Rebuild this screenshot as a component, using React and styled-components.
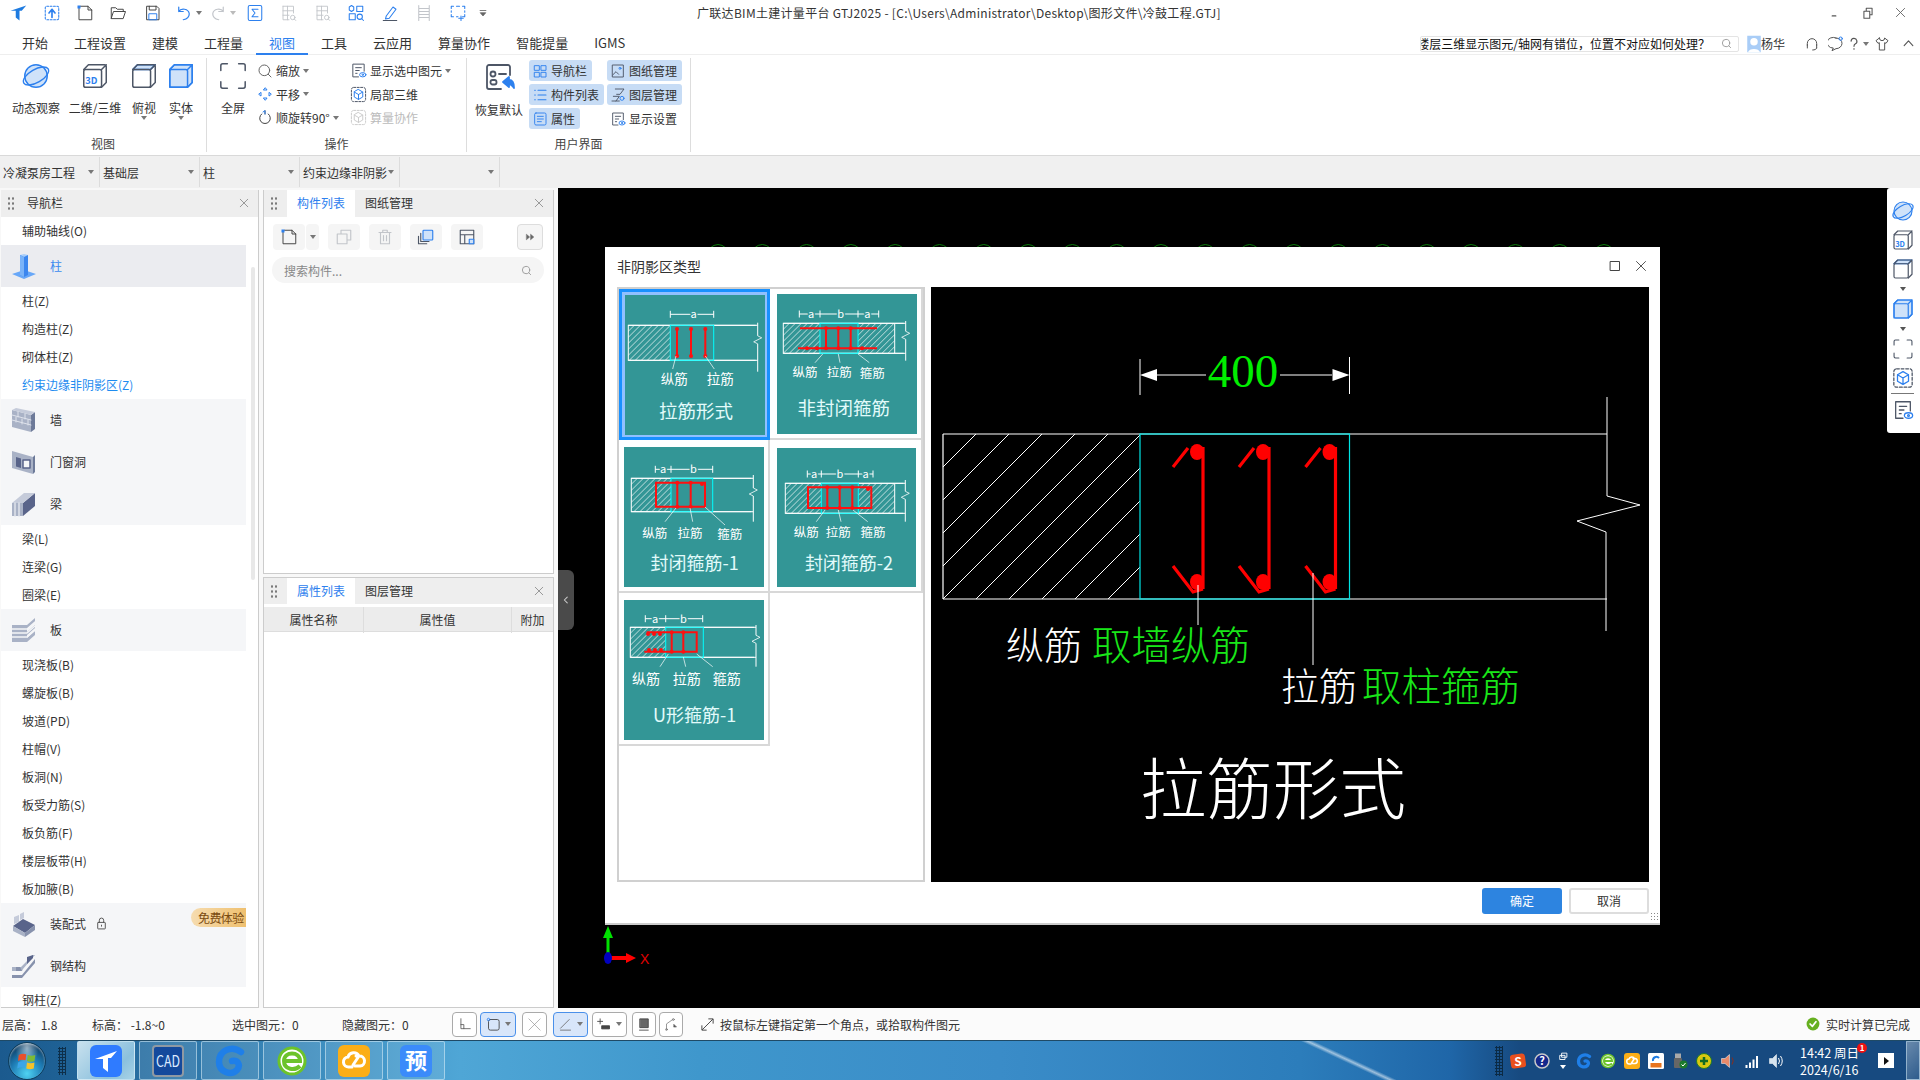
import React from 'react';
import styled, { createGlobalStyle } from 'styled-components';

const INK = '#4d5666';
const BLUE = '#2d80ee';
const PALE = '#cfe2f9';
const MUTED = '#c2c5ca';
const TEAL = '#339696';
const FONT = '"Noto Sans CJK SC", "Noto Sans", sans-serif';

const Global = createGlobalStyle`
  html, body { margin: 0; padding: 0; background: #000; }
  body { font-family: ${FONT}; font-size: 12px; color: #333; }
  #root { width: 1920px; height: 1080px; overflow: hidden; }
  * { box-sizing: border-box; }
`;

const I = styled.svg.attrs((p) => ({
  viewBox: p.$vb || '0 0 24 24',
  width: p.$s || 16,
  height: p.$s || 16,
}))`
  display: block;
  flex: none;
  fill: none;
  stroke: ${(p) => p.$c || INK};
  stroke-width: ${(p) => p.$sw || 1.5};
  stroke-linecap: round;
  stroke-linejoin: round;
  text { stroke: none; font-family: ${FONT}; }
`;

const Caret = styled.span`
  display: block;
  flex: none;
  width: 0;
  height: 0;
  border-left: 3px solid transparent;
  border-right: 3px solid transparent;
  border-top: 4px solid ${(p) => p.$c || '#777'};
`;

const Page = styled.div`
  width: 1920px;
  height: 1080px;
  display: flex;
  flex-direction: column;
  background: #fff;
  overflow: hidden;
`;

/* ---------- title bar ---------- */
const TitleBar = styled.div`
  height: 26px;
  padding-bottom: 1px;
  display: flex;
  align-items: center;
  flex: none;
`;
const QuickTools = styled.div`
  width: 697px;
  display: flex;
  align-items: center;
  flex: none;
`;
const QuickSlot = styled.div`
  width: ${(p) => p.$w}px;
  height: 25px;
  display: flex;
  align-items: center;
  justify-content: center;
  gap: 3px;
  flex: none;
`;
const WindowTitle = styled.div`
  flex: 1;
  font-size: 12px;
  color: #333;
  white-space: nowrap;
  letter-spacing: 0.3px;
`;
const WinControls = styled.div`
  display: flex;
  align-items: center;
  gap: 20px;
  padding-right: 14px;
`;

/* ---------- tabs ---------- */
const TabRow = styled.div`
  height: 29px;
  display: flex;
  align-items: stretch;
  padding-left: 9px;
  flex: none;
  border-bottom: 1px solid #eee;
`;
const RibbonTab = styled.div`
  padding: 6px 13px 0;
  font-size: 13px;
  line-height: 22px;
  position: relative;
  color: ${(p) => (p.$on ? BLUE : '#333')};
  border-bottom: 2px solid ${(p) => (p.$on ? BLUE : 'transparent')};
  margin-bottom: -1px;
  white-space: nowrap;
`;
const HelpArea = styled.div`
  margin-left: auto;
  display: flex;
  align-items: center;
  padding: 7px 0 0;
`;
const QuestionBox = styled.div`
  width: 319px;
  height: 16px;
  margin-right: 6px;
  display: flex;
  align-items: center;
  justify-content: flex-end;
  gap: 11px;
  padding-right: 6px;
  border: 1px solid #e4e4e4;
  border-radius: 2px;
  overflow: hidden;
  font-size: 12px;
  color: #111;
  white-space: nowrap;
`;
const UserName = styled.span`
  font-size: 12px;
  margin-left: -2px;
  width: 39px;
  white-space: nowrap;
`;
const HelpIcon = styled.div`
  width: ${(p) => p.$w}px;
  display: flex;
  justify-content: center;
  align-items: center;
  gap: 2px;
`;

/* ---------- ribbon ---------- */
const Ribbon = styled.div`
  height: 100px;
  display: flex;
  padding-top: 3px;
  flex: none;
  background: #fff;
`;
const Group = styled.div`
  width: ${(p) => p.$w}px;
  height: 94px;
  border-right: 1px solid #ddd;
  display: flex;
  flex-direction: column;
  flex: none;
`;
const GroupBody = styled.div`
  height: 78px;
  display: flex;
  flex: none;
`;
const GroupLabel = styled.div`
  text-align: center;
  font-size: 12px;
  line-height: 16px;
  color: #444;
`;
const BigButton = styled.div`
  width: ${(p) => p.$w}px;
  margin-left: ${(p) => p.$ml || 0}px;
  display: flex;
  flex-direction: column;
  align-items: center;
  padding-top: 3px;
  flex: none;
`;
const BigLabel = styled.div`
  margin-top: 9px;
  font-size: 12px;
  line-height: 16px;
  white-space: nowrap;
  color: #333;
`;
const SmallCol = styled.div`
  width: ${(p) => p.$w}px;
  margin-left: ${(p) => p.$ml || 0}px;
  display: flex;
  flex-direction: column;
  padding-top: 1px;
  flex: none;
`;
const SmallRow = styled.div`
  height: 23.5px;
  display: flex;
  align-items: center;
  gap: 3px;
  font-size: 12px;
  white-space: nowrap;
  color: ${(p) => (p.$off ? '#bbb' : '#333')};
`;
const PillCol = styled.div`
  width: ${(p) => p.$w}px;
  margin-left: ${(p) => p.$ml || 0}px;
  display: flex;
  flex-direction: column;
  align-items: flex-start;
  gap: 3px;
  padding-top: 2px;
  flex: none;
`;
const Pill = styled.div`
  height: 21px;
  display: flex;
  align-items: center;
  gap: 3px;
  padding: 0 5px 0 3px;
  font-size: 12px;
  white-space: nowrap;
  border-radius: 3px;
  background: ${(p) => (p.$on ? '#c7dcf5' : 'transparent')};
  color: #333;
`;

/* ---------- context bar ---------- */
const ContextBar = styled.div`
  height: 33px;
  flex: none;
  display: flex;
  background: #f0f0f0;
  border-top: 1px solid #d9d9d9;
  padding-top: 1px;
`;
const Combo = styled.div`
  width: ${(p) => p.$w || 100}px;
  height: 30px;
  padding: 0 5px 0 3px;
  display: flex;
  align-items: center;
  justify-content: space-between;
  border-right: 1px solid #dcdcdc;
  font-size: 12px;
  white-space: nowrap;
  color: #333;
  flex: none;
`;

/* ---------- main ---------- */
const Main = styled.div`
  height: 820px;
  flex: none;
  display: flex;
`;
const Dock = styled.div`
  width: 558px;
  flex: none;
  display: flex;
  gap: 4px;
  padding: 2px 4px 0 1px;
  background: #f8f8f8;
`;
const NavPanel = styled.div`
  width: 258px;
  display: flex;
  flex-direction: column;
  background: #fff;
  border-right: 1px solid #ccc;
  border-bottom: 1px solid #ccc;
  overflow: hidden;
`;
const PanelHead = styled.div`
  height: 27px;
  flex: none;
  display: flex;
  align-items: stretch;
  background: #eee;
`;
const Grip = styled.span`
  width: 7px;
  height: 14px;
  margin: 6px 0 0 6px;
  flex: none;
  background: radial-gradient(circle, #7a7a7a 1px, transparent 1.3px) 0 0 / 4px 5px;
`;
const HeadTitle = styled.div`
  margin-left: 13px;
  font-size: 12px;
  line-height: 26px;
  color: #333;
`;
const HeadClose = styled.div`
  margin-left: auto;
  padding: 8px 9px 0 0;
`;
const NavBody = styled.div`
  flex: 1;
  display: flex;
  min-height: 0;
`;
const NavList = styled.div`
  width: 245px;
  flex: none;
  overflow: hidden;
`;
const NavItem = styled.div`
  height: ${(p) => (p.$cut ? 20 : 28)}px;
  padding-left: 21px;
  padding-top: ${(p) => (p.$cut ? 6 : 0)}px;
  font-size: 12px;
  line-height: ${(p) => (p.$cut ? 14 : 28)}px;
  color: ${(p) => (p.$on ? '#1e8cf0' : '#333')};
  white-space: nowrap;
`;
const NavSection = styled.div`
  position: relative;
  height: 42px;
  display: flex;
  align-items: center;
  padding-left: 10px;
  padding-bottom: 1px;
  font-size: 12px;
  color: ${(p) => (p.$on ? '#3b8aef' : '#333')};
  background: ${(p) => (p.$on ? '#ebecf0' : '#f5f6f8')};
`;
const SectionLabel = styled.span`
  margin-left: 13px;
  white-space: nowrap;
`;
const Badge = styled.span`
  position: absolute;
  right: 0;
  top: 5px;
  width: 55px;
  height: 19px;
  line-height: 19px;
  padding-left: 7px;
  font-size: 12px;
  color: #7a4a10;
  white-space: nowrap;
  letter-spacing: -0.6px;
  border-radius: 10px 0 0 10px;
  background: linear-gradient(90deg, #f6dcb0, #efc06f);
`;
const LockSlot = styled.span`
  margin-left: 9px;
`;
const NavScroll = styled.div`
  width: 4px;
  height: 313px;
  margin: 50px 0 0 5px;
  border-radius: 2px;
  background: #e8e8e8;
`;
const MidCol = styled.div`
  width: 291px;
  display: flex;
  flex-direction: column;
  gap: 3px;
`;
const MidPanel = styled.div`
  height: ${(p) => (p.$h ? `${p.$h}px` : 'auto')};
  flex: ${(p) => (p.$h ? 'none' : 1)};
  background: #fff;
  border: 1px solid #ccc;
  border-top: none;
  display: flex;
  flex-direction: column;
`;
const MidHead = styled(PanelHead)`
  border-top: ${(p) => (p.$line ? '1px solid #ccc' : 'none')};
`;
const PanelTab = styled.div`
  width: ${(p) => (p.$on ? 68 : 72)}px;
  margin-left: ${(p) => (p.$first ? 10 : 0)}px;
  padding-left: 10px;
  font-size: 12px;
  line-height: 26px;
  background: ${(p) => (p.$on ? '#fff' : 'transparent')};
  color: ${(p) => (p.$on ? BLUE : '#333')};
`;
const MidTools = styled.div`
  display: flex;
  gap: 9px;
  padding: 7px 10px 0 9px;
`;
const ToolBtn = styled.div`
  width: ${(p) => p.$w || 32}px;
  height: 26px;
  margin-left: ${(p) => (p.$push ? 'auto' : 0)};
  margin-right: ${(p) => (p.$join ? '-8px' : 0)};
  display: flex;
  align-items: center;
  justify-content: center;
  border-radius: 4px;
  background: #f5f5f5;
  border: ${(p) => (p.$outlined ? '1px solid #ddd' : 'none')};
`;
const SearchField = styled.div`
  height: 26px;
  margin: 7px 9px 0 8px;
  padding: 0 12px;
  display: flex;
  align-items: center;
  justify-content: space-between;
  border-radius: 13px;
  background: #f5f5f5;
  font-size: 12px;
  color: #888;
`;
const AttrHead = styled.div`
  height: 25px;
  margin-top: 3px;
  display: grid;
  grid-template-columns: 100px 148px 1fr;
  background: #ececec;
  border-bottom: 1px solid #ddd;
  font-size: 12px;
  line-height: 26px;
  text-align: center;
  color: #333;
`;
const AttrCell = styled.div`
  border-right: ${(p) => (p.$end ? 'none' : '1px solid #ddd')};
`;

/* ---------- canvas ---------- */
const Canvas = styled.div`
  position: relative;
  flex: 1;
  background: #000;
`;
const Rail = styled.div`
  position: absolute;
  top: 0;
  right: 0;
  width: 33px;
  height: 245px;
  padding: 8px 2px 0 0;
  display: flex;
  flex-direction: column;
  align-items: center;
  background: #fff;
  border-radius: 3px 0 0 3px;
`;
const RailSlot = styled.div`
  height: ${(p) => p.$h || 29}px;
  display: flex;
  align-items: center;
  justify-content: center;
`;
const RailRule = styled.div`
  width: 23px;
  height: 1px;
  margin: 1px 0;
  background: #777;
`;
const Handle = styled.div`
  position: absolute;
  left: 0;
  top: 382px;
  width: 16px;
  height: 60px;
  display: flex;
  align-items: center;
  justify-content: center;
  background: #4a4a4a;
  border-radius: 0 6px 6px 0;
`;
const Arcs = styled.svg`
  position: absolute;
  left: 0;
  top: 52px;
  display: block;
`;
const Axes = styled.svg`
  position: absolute;
  left: 40px;
  top: 738px;
  display: block;
  text { font-family: "Liberation Sans", sans-serif; }
`;
const Dialog = styled.div`
  position: absolute;
  left: 47px;
  top: 59px;
  width: 1055px;
  height: 678px;
  display: flex;
  flex-direction: column;
  background: #fff;
  border-bottom: 2px solid #ccc;
`;
const DialogHead = styled.div`
  height: 40px;
  flex: none;
  display: flex;
  align-items: center;
  padding: 0 12px 2px;
  font-size: 14px;
  color: #333;
`;
const DialogActions = styled.div`
  margin-left: auto;
  display: flex;
  align-items: center;
  gap: 14px;
  padding-right: 1px;
`;
const DialogBody = styled.div`
  height: 595px;
  flex: none;
  display: flex;
  gap: 6px;
  padding: 0 11px 0 12px;
`;
const TypeList = styled.div`
  width: 308px;
  flex: none;
  border: 2px solid #d0d0d0;
  display: grid;
  grid-template-columns: 151px 153px;
  grid-template-rows: 151px 153px 153px;
  align-content: start;
`;
const TypeCell = styled.div`
  display: flex;
  align-items: center;
  justify-content: center;
  border-right: 2px solid #d8d8d8;
  border-bottom: 2px solid #d8d8d8;
  padding: ${(p) => p.$pt || 0}px 0 0 ${(p) => p.$pl || 0}px;
  ${(p) => (p.$on ? `background: #90c0ff; border: 3px solid #1890ff;` : '')}
`;
const TypeCard = styled.svg`
  display: block;
  flex: none;
  background: ${TEAL};
  text { font-family: ${FONT}; font-weight: 400; }
`;
const Preview = styled.svg`
  display: block;
  flex: none;
  background: #000;
  text { font-family: ${FONT}; font-weight: 300; }
  .num { font-family: "Liberation Serif", serif; font-weight: 400; }
`;
const DialogFoot = styled.div`
  flex: 1;
  display: flex;
  justify-content: flex-end;
  align-items: flex-start;
  gap: 7px;
  padding: 6px 11px 0 0;
`;
const FootBtn = styled.div`
  width: 80px;
  height: 26px;
  line-height: ${(p) => (p.$primary ? 26 : 22)}px;
  text-align: center;
  font-size: 12px;
  border-radius: 3px;
  color: ${(p) => (p.$primary ? '#fff' : '#333')};
  background: ${(p) => (p.$primary ? '#2d84e0' : '#fff')};
  border: ${(p) => (p.$primary ? 'none' : '2px solid #ddd')};
`;
const ResizeGrip = styled.span`
  position: absolute;
  right: 2px;
  bottom: 3px;
  width: 8px;
  height: 8px;
  background: radial-gradient(circle, #888 0.8px, transparent 1px) 0 0 / 3px 3px;
`;

/* ---------- status bar ---------- */
const StatusBar = styled.div`
  height: 32px;
  flex: none;
  display: flex;
  align-items: center;
  padding-left: 2px;
  background: #fbfbfb;
  font-size: 12px;
  color: #333;
`;
const StatusField = styled.div`
  width: ${(p) => p.$w}px;
  flex: none;
  white-space: nowrap;
`;
const SnapBtn = styled.div`
  width: ${(p) => p.$w}px;
  height: 25px;
  margin-right: ${(p) => p.$mr || 3}px;
  display: flex;
  align-items: center;
  justify-content: center;
  gap: 4px;
  flex: none;
  border-radius: 4px;
  border: 1px solid ${(p) => (p.$on ? '#4a90ea' : '#aaa')};
  background: ${(p) => (p.$on ? '#d8e6fa' : '#fff')};
`;
const HintIcon = styled.div`
  margin: 0 5px 0 14px;
`;
const StatusDone = styled.div`
  margin-left: auto;
  display: flex;
  align-items: center;
  gap: 6px;
  padding-right: 10px;
  white-space: nowrap;
`;

/* ---------- task bar ---------- */
const TaskBar = styled.div`
  position: relative;
  height: 40px;
  flex: none;
  display: flex;
  overflow: hidden;
  border-top: 1px solid #1f4a66;
  background: linear-gradient(
    90deg,
    #1b5a8e 0,
    #1f6296 70px,
    #4fa6d6 460px,
    #3f97cc 700px,
    #3a8cc8 1000px,
    #2c7dbb 1300px,
    #1f66a8 1450px,
    #174a80 1520px,
    #174a80 100%
  );
  &::before {
    content: '';
    position: absolute;
    left: 1300px;
    top: 0;
    width: 14px;
    height: 40px;
    transform: skewX(65deg);
    transform-origin: 0 0;
    background: linear-gradient(90deg, transparent, rgba(255, 255, 255, 0.55), transparent);
  }
`;
const StartArea = styled.div`
  width: 77px;
  flex: none;
  display: flex;
  align-items: center;
  padding-left: 8px;
`;
const StartOrb = styled.div`
  width: 38px;
  height: 38px;
  flex: none;
  border-radius: 50%;
  display: flex;
  align-items: center;
  justify-content: center;
  border: 1px solid #0e3d5c;
  background:
    radial-gradient(ellipse at 50% 15%, rgba(255, 255, 255, 0.55) 0, transparent 45%),
    radial-gradient(circle at 50% 85%, #4fd2f2 0, #1e7db6 45%, #0f3f66 80%);
  box-shadow: inset 0 1px 2px rgba(255, 255, 255, 0.6);
`;
const TaskGrip = styled.span`
  width: 8px;
  height: 28px;
  margin-left: 12px;
  flex: none;
  background: radial-gradient(circle, #0d2f4a 1px, transparent 1.2px) 0 0 / 3px 3px;
`;
const TaskApps = styled.div`
  display: flex;
  gap: 4px;
  position: relative;
`;
const TaskApp = styled.div`
  width: 58px;
  height: 39px;
  display: flex;
  align-items: center;
  justify-content: center;
  flex: none;
  border-radius: 2px;
  border: 1px solid rgba(220, 240, 250, 0.55);
  background: ${(p) =>
    p.$on
      ? 'linear-gradient(135deg, #c8e1ee, #8bc0dd 70%, #a7d3e7)'
      : 'rgba(255, 255, 255, 0.1)'};
`;
const Tray = styled.div`
  margin-left: auto;
  width: 425px;
  flex: none;
  display: flex;
  align-items: center;
  position: relative;
`;
const TrayGrip = styled.span`
  width: 8px;
  height: 30px;
  margin-right: 3px;
  flex: none;
  background: radial-gradient(circle, #0b2a44 1px, transparent 1.2px) 0 0 / 3px 3px;
`;
const TraySlot = styled.div`
  width: ${(p) => p.$w || 24}px;
  display: flex;
  flex-direction: column;
  align-items: center;
  gap: 4px;
  flex: none;
`;
const Clock = styled.div`
  position: relative;
  width: 78px;
  margin-left: 12px;
  color: #fff;
  font-size: 12.5px;
  line-height: 17px;
  flex: none;
  white-space: nowrap;
`;
const ClockBadge = styled.span`
  position: absolute;
  left: 57px;
  top: -1px;
  width: 10px;
  height: 10px;
  line-height: 10px;
  border-radius: 50%;
  text-align: center;
  font-size: 8px;
  font-weight: 700;
  background: #ee1111;
  color: #fff;
`;
const DesktopBox = styled.div`
  width: 16px;
  height: 15px;
  flex: none;
  display: flex;
  align-items: center;
  justify-content: center;
  background: #fff;
`;
const DesktopPlay = styled.span`
  width: 0;
  height: 0;
  border-top: 4px solid transparent;
  border-bottom: 4px solid transparent;
  border-left: 5px solid #111;
`;
const ShowDesktop = styled.div`
  width: 14px;
  height: 39px;
  margin-left: 12px;
  flex: none;
  border: 1px solid rgba(200, 225, 240, 0.6);
  background: linear-gradient(135deg, rgba(255, 255, 255, 0.35), rgba(255, 255, 255, 0.1));
`;

/* ---------- icons ---------- */
const Logo = ({ s = 18 }) => (
  <I $s={s} $c="none">
    <path d="M2 9L23 2l-6 7h-3v13l-5-4V9z" fill="#1e7be0" stroke="none" />
  </I>
);
const QNew = ({ s = 18 }) => (
  <I $s={s} $sw={1.3}>
    <path d="M6 3h10l5 5v13H4V5" stroke="#444" />
    <path d="M16 3v5h5" stroke="#444" />
    <rect x="2" y="2" width="4" height="4" stroke="none" fill={BLUE} />
  </I>
);
const Undo = ({ c = BLUE }) => (
  <I $s={18} $c={c} $sw={1.6}>
    <path d="M5 4v6h6M5 10c3-5 13-4 14 3 0 4-3 7-8 8" />
  </I>
);
const Redo = () => (
  <I $s={18} $c={MUTED} $sw={1.6}>
    <path d="M19 4v6h-6M19 10c-3-5-13-4-14 3 0 4 3 7 8 8" />
  </I>
);
const GridSearch = ({ c }) => (
  <I $s={18} $c={c} $sw={1.2}>
    <path d="M4 3h14v9M4 3v18h8M4 9h14M4 15h8M10 3v18" />
    <circle cx="17" cy="18" r="3" />
    <path d="M19 20l2 2" />
  </I>
);
const Orbit = ({ s = 30 }) => (
  <I $s={s} $vb="0 0 32 32" $c={BLUE} $sw={1.5}>
    <circle cx="16" cy="16" r="12" fill={PALE} />
    <ellipse cx="16" cy="16" rx="15" ry="7" transform="rotate(-30 16 16)" />
  </I>
);
const CubeBase = ({ s = 32, top, solid, c = INK, children }) => (
  <I $s={s} $vb="0 0 32 32" $c={c} $sw={1.6}>
    {top && <path d="M4 9l5-5h19l-5 5z" fill={PALE} stroke={BLUE} />}
    {solid && <path d="M4 9l5-5h19v19l-5 5H4z" fill={PALE} />}
    <rect x="4" y="9" width="19" height="19" rx="2" />
    <path d="M4 9l5-5h17a2 2 0 0 1 2 2v17l-5 5M23 9l5-5" />
    {children}
  </I>
);
const Cube3D = ({ s }) => (
  <CubeBase s={s}>
    <text x="5.5" y="25" fontSize="10" fontWeight="700" fill={BLUE}>3D</text>
  </CubeBase>
);
const FullFrame = ({ s = 30 }) => (
  <I $s={s} $vb="0 0 32 32" $c={INK} $sw={1.6}>
    <path d="M10 3H5a2 2 0 0 0-2 2v5M22 3h5a2 2 0 0 1 2 2v5M3 22v5a2 2 0 0 0 2 2h5M29 22v5a2 2 0 0 1-2 2h-5" />
  </I>
);
const LocalCube = ({ s = 18, c = BLUE, frame = INK }) => (
  <I $s={s} $c={c} $sw={1.4}>
    <rect x="2" y="2" width="20" height="20" rx="3" stroke={frame} strokeDasharray="3 2" />
    <path d="M12 5l6 3.5v7L12 19l-6-3.5v-7zM12 12l6-3.5M12 12L6 8.5M12 12v7" />
  </I>
);
const DisplayDoc = ({ s = 16, c = INK }) => (
  <I $s={s} $c={c} $sw={1.4}>
    <path d="M12 21H4V3h16v10" />
    <path d="M8 8h8M8 12h5M8 16h2" />
    <ellipse cx="18" cy="18" rx="4.5" ry="3" stroke={BLUE} />
    <circle cx="18" cy="18" r="1" stroke={BLUE} />
  </I>
);
const SearchGlass = ({ s = 12, c = '#999' }) => (
  <I $s={s} $c={c} $sw={2}>
    <circle cx="11" cy="11" r="8" />
    <path d="M17 17l4 4" />
  </I>
);
const CloseX = ({ s = 10, c = '#888' }) => (
  <I $s={s} $c={c} $sw={2}>
    <path d="M3 3l18 18M21 3L3 21" />
  </I>
);

const WallIcon = () => (
  <I $s={26} $vb="0 0 26 26" $c="none">
    <path d="M1 3l19 5v17L1 20z" fill="#a9b2c6" />
    <path d="M20 8l4-3v17l-4 3z" fill="#6d7a99" />
    <path d="M1 3l4-2 19 4-4 3z" fill="#c5cbda" />
    <path d="M1 8l19 5M1 13l19 5M7 5v5M14 7v5M5 10v5M11 12v5M17 13v5" stroke="#dfe3ec" strokeWidth="1" />
  </I>
);
const DoorIcon = () => (
  <I $s={26} $vb="0 0 26 26" $c="none">
    <path d="M1 2l21 6v17L1 19z" fill="#a9b2c6" />
    <path d="M22 8l2-2v17l-2 2z" fill="#6d7a99" />
    <path d="M5 8l5 1.4V19l-5-1.4z" fill="#59648a" />
    <rect x="12" y="11" width="7" height="8" fill="#f5f6f8" stroke="#59648a" strokeWidth="1.5" />
  </I>
);
const BeamIcon = () => (
  <I $s={26} $vb="0 0 26 26" $c="none">
    <path d="M1 12h11v13H1z" fill="#a9b2c6" />
    <path d="M12 12L24 2v13L12 25z" fill="#59648a" />
    <path d="M1 12L13 2h11L12 12z" fill="#c5cbda" />
    <path d="M4 12v13M8 12v13" stroke="#dfe3ec" />
  </I>
);
const SlabIcon = () => (
  <I $s={26} $vb="0 0 26 26" $c="none">
    <path d="M1 8h15l8-7v4l-8 7v3l8-7v3l-8 7v3l8-7v4l-8 7H1z" fill="#a9b2c6" />
    <path d="M1 12h15M1 16h15M1 20h15M16 12l8-7M16 16l8-7M16 20l8-7" stroke="#f5f6f8" />
  </I>
);
const PrefabIcon = () => (
  <I $s={26} $vb="0 0 26 26" $c="none">
    <path d="M2 15l10-7 12 6-10 8z" fill="#59648a" />
    <path d="M2 15v5l12 6v-4z" fill="#a9b2c6" />
    <path d="M14 22v4l10-7v-5z" fill="#8792ad" />
    <path d="M3 6l5-2v7l-5 2zM9 3l4-2v6l-4 2z" fill="#c5cbda" />
  </I>
);
const SteelIcon = () => (
  <I $s={26} $vb="0 0 26 26" $c="none">
    <path d="M1 18h10l1-2 12-14-2 0L10 14H1z" fill="#a9b2c6" />
    <path d="M5 14h4l2 4H5z" fill="#8792ad" />
    <path d="M1 22h10l13-16v4L11 25H1z" fill="#8792ad" />
    <path d="M16 4l6-2v3l-6 6z" fill="#59648a" />
  </I>
);
const ColumnIcon = () => (
  <I $s={26} $vb="0 0 26 26" $c="none">
    <path d="M1 21l12-4 12 4-12 5z" fill="#67a7f8" />
    <path d="M9 2h8v20l-4 2-4-2z" fill="#3b86ee" />
    <path d="M9 2l4-1 4 1-4 2z" fill="#a8cefb" />
    <path d="M13 4v20l-4-2V2z" fill="#7ab3f8" />
  </I>
);

/* ---------- drawing parts ---------- */
const Hatch = ({ id, x, y, w, h, step, c = '#fff', sw = 0.7 }) => {
  const lines = [];
  for (let v = x - h; v < x + w; v += step) lines.push(v);
  return (
    <g>
      <clipPath id={id}>
        <rect x={x} y={y} width={w} height={h} />
      </clipPath>
      <g clipPath={`url(#${id})`} stroke={c} strokeWidth={sw}>
        {lines.map((v) => (
          <line key={v} x1={v} y1={y + h} x2={v + h} y2={y} />
        ))}
      </g>
    </g>
  );
};

const CARDS = [
  {
    id: 'c1', size: [140, 140], title: '拉筋形式', tx: 71, ty: 115, tf: 18.5,
    dy: 19.3, ticks: [45.3, 88.7], letters: [['a', 68.7]], x0: 3.3, xr: 132.7, y0: 30.3, y1: 65.3, vt: 27.7, vb: 76.7,
    hatch: [[3.3, 45.3]], cyan: [45.3, 88.7],
    red: 'M52 34v27M66 34v27M80.3 34v27', nubs: [[52, 34], [66, 34], [80.3, 34], [52, 61], [66, 61], [80.3, 61]],
    leaders: [[51, 61, 47.7, 74], [80.3, 61, 89.3, 74]],
    labels: [['纵筋', 49.3, 83], ['拉筋', 95.3, 83]], lf: 13.5,
  },
  {
    id: 'c2', size: [140, 140], title: '非封闭箍筋', tx: 66.7, ty: 112.5, tf: 18.5,
    dy: 20, ticks: [22.3, 43, 81, 101.7], letters: [['a', 34], ['b', 63.7], ['a', 90.3]], x0: 6.3, xr: 128.7, y0: 29.3, y1: 59.3, vt: 27, vb: 66.7, walls: [117.7],
    hatch: [[6.3, 43], [81, 117.7]], cyan: [43, 81],
    red: 'M23 34.3h77M21 54.3h79M49 34.3v20M61.3 34.3v20M73.7 34.3v20', nubs: [[49, 34.3], [61.3, 34.3], [73.7, 34.3], [30, 54.3], [40, 54.3], [49, 54.3], [61.3, 54.3], [73.7, 54.3], [85, 54.3]],
    leaders: [[45.7, 60, 38, 68.7], [61.3, 60, 63, 68.7], [81, 60, 92.3, 68.7]],
    labels: [['纵筋', 28, 77], ['拉筋', 62.3, 77.5], ['箍筋', 95.3, 78.5]], lf: 12.5,
  },
  {
    id: 'c3', size: [140, 140], title: '封闭箍筋-1', tx: 70.7, ty: 114.5, tf: 18,
    dy: 22.3, ticks: [31.3, 47, 88.7], letters: [['a', 39], ['b', 69.3]], x0: 7.3, xr: 129.3, y0: 31.3, y1: 64.7, vt: 28, vb: 74.7,
    hatch: [[7.3, 47]], cyan: [47, 88.7],
    red: 'M32 35.7h49v24H32zM53.3 35.7v24M66.7 35.7v24', nubs: [[53.3, 35.7], [66.7, 35.7], [78, 37], [53.3, 59.7], [66.7, 59.7]],
    leaders: [[52, 61, 41, 74.7], [66, 61, 68.7, 74.7], [81, 60, 101, 78]],
    labels: [['纵筋', 30.7, 85.8], ['拉筋', 66, 85.8], ['箍筋', 105.7, 86.5]], lf: 12.5,
  },
  {
    id: 'c4', size: [139, 139], title: '封闭箍筋-2', tx: 72, ty: 113.5, tf: 18,
    dy: 26, ticks: [30.3, 44.3, 81.3, 96], letters: [['a', 37], ['b', 63], ['a', 88.7]], x0: 8.3, xr: 128.3, y0: 35.3, y1: 65.3, vt: 32, vb: 73.7, walls: [117.7],
    hatch: [[8.3, 44.3], [81.3, 117.7]], cyan: [44.3, 81.3],
    red: 'M31 39.3h63.3V60H31zM50.3 39.3V60M62.7 39.3V60M75.3 39.3V60', nubs: [[50.3, 39.3], [62.7, 39.3], [75.3, 39.3], [91, 41], [50.3, 60], [62.7, 60], [75.3, 60]],
    leaders: [[48, 62, 39.3, 73.7], [61.3, 62, 64, 73.7], [76, 62, 90.7, 73.7]],
    labels: [['纵筋', 29.3, 83.2], ['拉筋', 61.3, 83.2], ['箍筋', 96, 83.5]], lf: 12.5,
  },
  {
    id: 'c5', size: [140, 140], title: 'U形箍筋-1', tx: 70.7, ty: 114, tf: 18,
    dy: 18.7, ticks: [21.3, 41.7, 78.7], letters: [['a', 31], ['b', 59.3]], x0: 6.3, xr: 132, y0: 27.3, y1: 57.3, vt: 25, vb: 66.7,
    hatch: [[6.3, 41.7]], cyan: [41.7, 79.3],
    red: 'M22.7 32.3h50v19.4H20.3M47.7 32.3v19.4M59.3 32.3v19.4', nubs: [[24, 34], [30, 34], [36, 34], [47.7, 32.3], [59.3, 32.3], [25, 50], [31, 50], [37, 50], [47.7, 51.7], [59.3, 51.7]],
    leaders: [[44.3, 54, 36, 66.7], [59.3, 57, 61.7, 66.7], [72.7, 54, 88.7, 66.7]],
    labels: [['纵筋', 22, 77.5], ['拉筋', 62.7, 77.5], ['箍筋', 102.7, 77.5]], lf: 14,
  },
];

const CardDrawing = ({ card }) => {
  const { id, size, x0, xr, y0, y1, vt, vb, dy, ticks, letters, hatch, cyan, red, nubs, leaders, labels, lf, title, tx, ty, tf, walls = [] } = card;
  const ym = (y0 + y1) / 2 - 1;
  const tickFirst = ticks[0];
  const tickLast = ticks[ticks.length - 1];
  return (
    <TypeCard width={size[0]} height={size[1]} viewBox={`0 0 ${size[0]} ${size[1]}`}>
      {hatch.map(([a, b], i) => (
        <Hatch key={a} id={`${id}h${i}`} x={a} y={y0} w={b - a} h={y1 - y0} step={6} />
      ))}
      <rect x={x0} y={y0} width={xr - x0} height={y1 - y0} fill="none" stroke="#fff" strokeWidth="1" />
      <rect x={xr - 2} y={y0 - 1} width="4" height={y1 - y0 + 2} fill={TEAL} />
      <path d={`M${x0} ${y0}H${xr}M${x0} ${y1}H${xr}`} stroke="#fff" strokeWidth="1" />
      <path d={`M${xr} ${vt}V${ym - 6}M${xr} ${ym + 2}V${vb}`} stroke="#fff" strokeWidth="1" />
      <polyline points={`${xr},${ym - 6} ${xr + 4},${ym - 4} ${xr - 4},${ym} ${xr},${ym + 2}`} fill="none" stroke="#fff" strokeWidth="0.8" />
      {walls.map((w) => (
        <line key={w} x1={w} x2={w} y1={y0} y2={y1} stroke="#fff" strokeWidth="1" />
      ))}
      <rect x={cyan[0]} y={y0} width={cyan[1] - cyan[0]} height={y1 - y0} fill="none" stroke="#00ffff" strokeWidth="1" />
      <path d={red} fill="none" stroke="#ff1010" strokeWidth="2" />
      {nubs.map(([x, y]) => (
        <circle key={`${x}-${y}`} cx={x} cy={y} r="2" fill="#ff1010" />
      ))}
      {leaders.map((l) => (
        <line key={l.join()} x1={l[0]} y1={l[1]} x2={l[2]} y2={l[3]} stroke="#fff" strokeWidth="0.7" />
      ))}
      <line x1={tickFirst} x2={tickLast} y1={dy} y2={dy} stroke="#fff" strokeWidth="1" />
      {ticks.map((t) => (
        <line key={t} x1={t} x2={t} y1={dy - 3.5} y2={dy + 3.5} stroke="#fff" strokeWidth="1" />
      ))}
      {letters.map(([t, x]) => (
        <text key={`${t}${x}`} x={x} y={dy - 1} fontSize="11" fill="#fff" textAnchor="middle" dominantBaseline="central" stroke={TEAL} strokeWidth="3" paintOrder="stroke">
          {t}
        </text>
      ))}
      {labels.map(([t, x, y]) => (
        <text key={t} x={x} y={y} fontSize={lf} fill="#fff" textAnchor="middle" dominantBaseline="central">
          {t}
        </text>
      ))}
      <text x={tx} y={ty} fontSize={tf} fill="#e2fbfb" textAnchor="middle" dominantBaseline="central">
        {title}
      </text>
    </TypeCard>
  );
};

const BAR_X = [272, 338, 404.5];
const PreviewDrawing = () => {
  const hatchXs = [];
  for (let v = 12 - 165; v < 209; v += 33) hatchXs.push(v);
  return (
    <Preview width="718" height="595" viewBox="0 0 718 595">
      <clipPath id="pvh"><rect x="12" y="147" width="197" height="165" /></clipPath>
      <g clipPath="url(#pvh)" stroke="#fff" strokeWidth="1">
        {hatchXs.map((v) => (
          <line key={v} x1={v} y1="312" x2={v + 165} y2="147" />
        ))}
      </g>
      <path d="M12 147H676M12 312H676M12 147V312" stroke="#fff" strokeWidth="1.2" fill="none" />
      <path d="M676 110V209M675 245V344" stroke="#fff" strokeWidth="1" />
      <polyline points="676,209 709,218 646,234 675,245" fill="none" stroke="#fff" strokeWidth="1" />
      <rect x="209" y="147" width="209.5" height="165" fill="none" stroke="#00e5e5" strokeWidth="1.2" />
      <path d="M209 72V108M418.5 70V107M226 88H275M349 88H401" stroke="#fff" strokeWidth="1" />
      <path d="M209 88l17-6v12zM418.5 88l-17-6v12z" fill="#fff" />
      <text className="num" x="312" y="100" fontSize="47" fill="#00ee00" textAnchor="middle">400</text>
      {BAR_X.map((x) => (
        <g key={x}>
          <path d={`M${x} 160V302M${x - 15} 161L${x - 30} 180M${x - 30} 279L${x - 10} 305L${x} 302`} stroke="#ff0000" strokeWidth="3.2" fill="none" />
          <ellipse cx={x - 6} cy="165" rx="7" ry="8" fill="#ff0000" />
          <ellipse cx={x - 6} cy="295" rx="7" ry="8" fill="#ff0000" />
        </g>
      ))}
      <path d="M267 298V338M382 286V378" stroke="#fff" strokeWidth="1" />
      <text x="75" y="355.5" fontSize="38" fill="#fff" dominantBaseline="central">纵筋</text>
      <text x="161" y="355.5" fontSize="39.5" fill="#19e619" dominantBaseline="central">取墙纵筋</text>
      <text x="350" y="396" fontSize="38" fill="#fff" dominantBaseline="central">拉筋</text>
      <text x="431" y="396" fontSize="39.5" fill="#19e619" dominantBaseline="central">取柱箍筋</text>
      <text x="209" y="498" fontSize="66.5" fill="#fff" dominantBaseline="central">拉筋形式</text>
    </Preview>
  );
};

/* ---------- data ---------- */
const TABS = ['开始', '工程设置', '建模', '工程量', '视图', '工具', '云应用', '算量协作', '智能提量', 'IGMS'];
const NAV = [
  { t: '辅助轴线(O)' },
  { t: '柱', s: ColumnIcon, on: true },
  { t: '柱(Z)' }, { t: '构造柱(Z)' }, { t: '砌体柱(Z)' }, { t: '约束边缘非阴影区(Z)', on: true },
  { t: '墙', s: WallIcon }, { t: '门窗洞', s: DoorIcon }, { t: '梁', s: BeamIcon },
  { t: '梁(L)' }, { t: '连梁(G)' }, { t: '圈梁(E)' },
  { t: '板', s: SlabIcon },
  { t: '现浇板(B)' }, { t: '螺旋板(B)' }, { t: '坡道(PD)' }, { t: '柱帽(V)' }, { t: '板洞(N)' },
  { t: '板受力筋(S)' }, { t: '板负筋(F)' }, { t: '楼层板带(H)' }, { t: '板加腋(B)' },
  { t: '装配式', s: PrefabIcon, lock: true, badge: '免费体验' },
  { t: '钢结构', s: SteelIcon },
  { t: '钢柱(Z)', cut: true },
];
const ARCS = Array.from({ length: 21 }, (_, i) => 160 + i * 44.3);
const CELL_PAD = [{}, { pl: 2 }, { pt: 3 }, { pt: 3, pl: 2 }, { pt: 3 }];

const TileIcon = styled.svg.attrs((p) => ({ viewBox: '0 0 32 32', width: p.$s || 32, height: p.$s || 32 }))`
  display: block;
  flex: none;
  text { font-family: ${FONT}; }
`;
const AppTile = ({ s = 32 }) => (
  <TileIcon $s={s}>
    <rect width="32" height="32" rx="6" fill="#2f7bff" />
    <path d="M5 14L27 6l-6 7h-3v14l-5-4V14z" fill="#fff" />
  </TileIcon>
);
const CadTile = ({ s = 32 }) => (
  <TileIcon $s={s}>
    <rect x="1" y="1" width="30" height="30" rx="3" fill="#14499c" stroke="#8f99a3" strokeWidth="2" />
    <text x="16" y="22" fontSize="16" fill="#dbe9ff" textAnchor="middle" fontFamily="Liberation Sans" textLength="24" lengthAdjust="spacingAndGlyphs">CAD</text>
  </TileIcon>
);
const SwirlTile = ({ s = 32 }) => (
  <TileIcon $s={s}>
    <path d="M27 7C18 0 5 5 5 17c0 10 12 14 18 8 4-5 1-10-5-9" fill="none" stroke="#1f7fe8" strokeWidth="6.5" strokeLinecap="round" />
  </TileIcon>
);
const EdgeTile = ({ s = 32 }) => (
  <TileIcon $s={s}>
    <circle cx="16" cy="16" r="13" fill="#fff" stroke="#6cc32a" strokeWidth="3" />
    <path d="M8 16h16c0-10-16-10-16 0 0 9 11 10 16 5" fill="none" stroke="#6cc32a" strokeWidth="4" />
  </TileIcon>
);
const CloudTile = ({ s = 32 }) => (
  <TileIcon $s={s}>
    <rect width="32" height="32" rx="6" fill="#fbae17" />
    <path d="M14 22H11a5 5 0 0 1-1-10 6 6 0 0 1 11-1l-6 9M18 11h3a5 5 0 0 1 1 10h-5" fill="none" stroke="#fff" strokeWidth="3" strokeLinecap="round" />
  </TileIcon>
);
const YuTile = ({ s = 32 }) => (
  <TileIcon $s={s}>
    <rect width="32" height="32" rx="6" fill="#3b8bfa" />
    <text x="16" y="24" fontSize="22" fill="#fff" textAnchor="middle" fontWeight="700">预</text>
  </TileIcon>
);

const WinFlag = () => (
  <TileIcon $s={24}>
    <path d="M5 8q5-3 10-1l-1 8q-5-2-10 1z" fill="#e8502c" />
    <path d="M17 8q5 2 10 0l-1 8q-5 2-10 0z" fill="#7dbb35" />
    <path d="M4 18q5-3 10-1l-1 8q-5-2-10 1z" fill="#3ba5e8" />
    <path d="M16 18q5 2 10 0l-1 8q-5 2-10 0z" fill="#f5c22a" />
  </TileIcon>
);

export default function App() {
  return (
    <Page>
      <Global />
      <TitleBar>
        <QuickTools>
          <QuickSlot $w={35}><Logo /></QuickSlot>
          <QuickSlot $w={34}>
            <I $s={18} $c={BLUE} $sw={1.4}>
              <rect x="3" y="3" width="18" height="18" rx="2" strokeDasharray="2.5 2" />
              <path d="M12 18V8M8 12l4-5 4 5" strokeWidth="2.2" />
            </I>
          </QuickSlot>
          <QuickSlot $w={32}><QNew /></QuickSlot>
          <QuickSlot $w={34}>
            <I $s={18} $c="#444" $sw={1.3}><path d="M3 19V5h6l2 2h8v3M3 19l3-9h16l-3 9z" /></I>
          </QuickSlot>
          <QuickSlot $w={36}>
            <I $s={18} $c="#444" $sw={1.3}>
              <path d="M4 3h13l3 3v15H4zM7 3v5h9V3" />
              <rect x="7" y="13" width="10" height="8" stroke={BLUE} />
            </I>
          </QuickSlot>
          <QuickSlot $w={34}><Undo /><Caret /></QuickSlot>
          <QuickSlot $w={34}><Redo /><Caret $c="#bbb" /></QuickSlot>
          <QuickSlot $w={32}>
            <I $s={18} $c={BLUE} $sw={1.4}>
              <rect x="3" y="2" width="18" height="20" rx="2" />
              <path d="M16 7H8l4 5-4 5h8" />
            </I>
          </QuickSlot>
          <QuickSlot $w={36}><GridSearch c={MUTED} /></QuickSlot>
          <QuickSlot $w={32}><GridSearch c={MUTED} /></QuickSlot>
          <QuickSlot $w={34}>
            <I $s={18} $c={BLUE} $sw={1.4}>
              <path d="M3 4l3-2 3 2v4l-3 2-3-2zM13 3h8v7h-8zM3 13h8v8H3z" />
              <circle cx="17" cy="17" r="3.5" />
              <path d="M20 20l2 2" />
            </I>
          </QuickSlot>
          <QuickSlot $w={34}>
            <I $s={18} $c={BLUE} $sw={1.4}>
              <path d="M7 16l9-12 4 3-9 12-5 1z" />
              <path d="M3 22h18" stroke={INK} />
            </I>
          </QuickSlot>
          <QuickSlot $w={34}>
            <I $s={18} $c={MUTED} $sw={1.4}>
              <path d="M5 2v20M19 2v20M5 6h14M5 18h14M5 10h14M5 14h14" />
            </I>
          </QuickSlot>
          <QuickSlot $w={34}>
            <I $s={18} $c={BLUE} $sw={1.4}>
              <path d="M3 6V3h3M18 3h3v3M3 14v3h3M21 14v3h-3M10 3h4M3 9v2M21 9v2M10 17h2" />
              <path d="M16 16v6M13 19h6" />
            </I>
          </QuickSlot>
          <QuickSlot $w={16}>
            <I $s={10} $c="#666" $sw={2}><path d="M5 6h14" /><path d="M6 12l6 7 6-7z" fill="#666" /></I>
          </QuickSlot>
        </QuickTools>
        <WindowTitle>广联达BIM土建计量平台 GTJ2025 - [C:\Users\Administrator\Desktop\图形文件\冷鼓工程.GTJ]</WindowTitle>
        <WinControls>
          <I $s={14} $c="#555" $sw={2.4}><path d="M9 17h6" /></I>
          <I $s={14} $c="#555" $sw={1.8}>
            <path d="M5 9h10v12H5zM9 9V4h10v11h-4" />
          </I>
          <CloseX s={11} c="#666" />
        </WinControls>
      </TitleBar>

      <TabRow>
        {TABS.map((t) => (
          <RibbonTab key={t} $on={t === '视图'}>{t}</RibbonTab>
        ))}
        <HelpArea>
          <QuestionBox>
            楼层三维显示图元/轴网有错位，位置不对应如何处理？
            <SearchGlass s={11} />
          </QuestionBox>
          <HelpIcon $w={18}>
            <I $s={18} $c="#fff" $sw={1}>
              <rect x="3" y="1" width="18" height="22" fill="#a9cdf7" stroke="none" />
              <circle cx="12" cy="9" r="5" fill="#fff" stroke="none" />
              <path d="M4 23c1-6 15-6 16 0z" fill="#fff" stroke="none" />
            </I>
          </HelpIcon>
          <UserName>杨华</UserName>
          <HelpIcon $w={24}>
            <I $s={16} $c="#555"><path d="M5 14V11a7 7 0 0 1 14 0v3M5 13v5M19 13v5M19 18c0 2-3 3-6 3" /></I>
          </HelpIcon>
          <HelpIcon $w={24}>
            <I $s={16} $c="#555">
              <path d="M12 3a9 8 0 1 0-4 15l-2 4 6-3a9 8 0 0 0 0-16z" />
              <circle cx="19" cy="4" r="2.5" stroke={BLUE} />
            </I>
          </HelpIcon>
          <HelpIcon $w={20}>
            <I $s={14} $c="#555" $sw={2}><path d="M7 7a5 5 0 1 1 7 5c-2 1-2 2-2 4M12 20v1" /></I>
            <Caret />
          </HelpIcon>
          <HelpIcon $w={28}>
            <I $s={16} $c="#555"><path d="M8 3L3 7l3 4 2-1v11h8V10l2 1 3-4-5-4a4 4 0 0 1-8 0z" /></I>
          </HelpIcon>
          <HelpIcon $w={24}>
            <I $s={13} $c="#555" $sw={2}><path d="M4 16l8-9 8 9" /></I>
          </HelpIcon>
        </HelpArea>
      </TabRow>

      <Ribbon>
        <Group $w={207}>
          <GroupBody>
            <BigButton $w={48} $ml={12}>
              <Orbit />
              <BigLabel>动态观察</BigLabel>
            </BigButton>
            <BigButton $w={52} $ml={9}>
              <Cube3D s={30} />
              <BigLabel>二维/三维</BigLabel>
            </BigButton>
            <BigButton $w={30} $ml={8}>
              <CubeBase s={30} top />
              <BigLabel>俯视</BigLabel>
              <Caret />
            </BigButton>
            <BigButton $w={30} $ml={7}>
              <CubeBase s={30} solid c={BLUE} />
              <BigLabel>实体</BigLabel>
              <Caret />
            </BigButton>
          </GroupBody>
          <GroupLabel>视图</GroupLabel>
        </Group>
        <Group $w={260}>
          <GroupBody>
            <BigButton $w={30} $ml={11}>
              <FullFrame />
              <BigLabel>全屏</BigLabel>
            </BigButton>
            <SmallCol $w={93} $ml={9}>
              <SmallRow>
                <I $s={16} $c="#666"><circle cx="11" cy="11" r="8" /><path d="M17 17l4 4" /></I>
                缩放<Caret />
              </SmallRow>
              <SmallRow>
                <I $s={16} $c={BLUE}><path d="M12 3l-2.5 3h5zM12 21l-2.5-3h5zM3 12l3-2.5v5zM21 12l-3-2.5v5z" /></I>
                平移<Caret />
              </SmallRow>
              <SmallRow>
                <I $s={16} $c="#444"><path d="M17 6a8 8 0 1 1-10 0M12 1v5" /><path d="M9 3l3-2v5" stroke={BLUE} /></I>
                顺旋转90°<Caret />
              </SmallRow>
            </SmallCol>
            <SmallCol $w={110}>
              <SmallRow>
                <DisplayDoc s={17} />
                显示选中图元<Caret />
              </SmallRow>
              <SmallRow>
                <LocalCube s={17} />
                局部三维
              </SmallRow>
              <SmallRow $off>
                <LocalCube s={17} c="#ccc" frame="#ccc" />
                算量协作
              </SmallRow>
            </SmallCol>
          </GroupBody>
          <GroupLabel>操作</GroupLabel>
        </Group>
        <Group $w={224}>
          <GroupBody>
            <BigButton $w={48} $ml={8}>
              <I $s={32} $vb="0 0 32 32" $c={INK} $sw={1.8}>
                <path d="M27 14V6a2 2 0 0 0-2-2H6a2 2 0 0 0-2 2v20a2 2 0 0 0 2 2h12" />
                <circle cx="10" cy="13" r="2.5" /><path d="M16 13h7" />
                <rect x="7.5" y="19" width="6" height="4.5" rx="2" />
                <path d="M20 21l6-5v3c3 0 5 3 5 8-2-3-3-4-5-4v3z" fill={BLUE} stroke={BLUE} />
              </I>
              <BigLabel>恢复默认</BigLabel>
            </BigButton>
            <PillCol $w={78} $ml={6}>
              <Pill $on>
                <I $s={16} $c={BLUE} $sw={1.4}><path d="M4 4h7v7H4zM14 4h7v7h-7zM4 14h7v7H4zM14 14h7v7h-7z" /></I>
                导航栏
              </Pill>
              <Pill $on>
                <I $s={16} $c={BLUE} $sw={1.6}><path d="M9 5h12M9 12h12M9 19h12M4 5h1M4 12h1M4 19h1" /></I>
                构件列表
              </Pill>
              <Pill $on>
                <I $s={16} $c={BLUE} $sw={1.4}><rect x="4" y="3" width="17" height="18" rx="2" /><path d="M8 8h9M8 12h9M8 16h6" /></I>
                属性
              </Pill>
            </PillCol>
            <PillCol $w={76}>
              <Pill $on>
                <I $s={16} $c={INK} $sw={1.4}><path d="M4 3h16v18H4zM4 18l5-5 4 4" /><circle cx="15" cy="8" r="1.5" stroke={BLUE} /></I>
                图纸管理
              </Pill>
              <Pill $on>
                <I $s={16} $c={INK} $sw={1.4}><path d="M8 3h13l-6 8h-5M3 21h11M5 14h9l-5 7" /><circle cx="18" cy="17" r="3" stroke={BLUE} /></I>
                图层管理
              </Pill>
              <Pill>
                <DisplayDoc s={16} />
                显示设置
              </Pill>
            </PillCol>
          </GroupBody>
          <GroupLabel>用户界面</GroupLabel>
        </Group>
      </Ribbon>

      <ContextBar>
        <Combo>冷凝泵房工程<Caret /></Combo>
        <Combo>基础层<Caret /></Combo>
        <Combo>柱<Caret /></Combo>
        <Combo $w={100}>约束边缘非阴影<Caret /></Combo>
        <Combo $w={100}><span /><Caret /></Combo>
      </ContextBar>

      <Main>
        <Dock>
          <NavPanel>
            <PanelHead>
              <Grip />
              <HeadTitle>导航栏</HeadTitle>
              <HeadClose><CloseX /></HeadClose>
            </PanelHead>
            <NavBody>
              <NavList>
                {NAV.map((n) =>
                  n.s ? (
                    <NavSection key={n.t} $on={n.on}>
                      <n.s />
                      <SectionLabel>{n.t}</SectionLabel>
                      {n.lock && (
                        <LockSlot>
                          <I $s={13} $c="#555" $sw={1.8}>
                            <rect x="5" y="10" width="14" height="12" rx="1" />
                            <path d="M8 10V6a4 4 0 0 1 8 0v4M12 15v2" />
                          </I>
                        </LockSlot>
                      )}
                      {n.badge && <Badge>{n.badge}</Badge>}
                    </NavSection>
                  ) : (
                    <NavItem key={n.t} $on={n.on} $cut={n.cut}>{n.t}</NavItem>
                  )
                )}
              </NavList>
              <NavScroll />
            </NavBody>
          </NavPanel>

          <MidCol>
            <MidPanel $h={384}>
              <MidHead>
                <Grip />
                <PanelTab $on $first>构件列表</PanelTab>
                <PanelTab>图纸管理</PanelTab>
                <HeadClose><CloseX /></HeadClose>
              </MidHead>
              <MidTools>
                <ToolBtn $join>
                  <QNew />
                </ToolBtn>
                <ToolBtn $w={13}><Caret /></ToolBtn>
                <ToolBtn>
                  <I $s={18} $c={MUTED}><path d="M8 8V3h13v13h-5M3 8h13v13H3z" /></I>
                </ToolBtn>
                <ToolBtn>
                  <I $s={18} $c={MUTED}><path d="M4 6h16M9 6V3h6v3M6 6v15h12V6M10 10v7M14 10v7" /></I>
                </ToolBtn>
                <ToolBtn>
                  <I $s={18} $c={INK}>
                    <rect x="8" y="3" width="13" height="13" rx="1" fill={PALE} stroke={BLUE} />
                    <path d="M5 7v11h11M2 11v10h11" />
                  </I>
                </ToolBtn>
                <ToolBtn>
                  <I $s={18} $c={INK}>
                    <path d="M3 3h18v18H3zM3 9h18M9 9v12" />
                    <rect x="15" y="15" width="6" height="6" fill={PALE} stroke={BLUE} />
                  </I>
                </ToolBtn>
                <ToolBtn $w={26} $push $outlined>
                  <I $s={10} $c="#666"><path d="M4 6l7 6-7 6zM14 6l7 6-7 6z" fill="#666" /></I>
                </ToolBtn>
              </MidTools>
              <SearchField>
                搜索构件...
                <SearchGlass s={11} />
              </SearchField>
            </MidPanel>
            <MidPanel>
              <MidHead $line>
                <Grip />
                <PanelTab $on $first>属性列表</PanelTab>
                <PanelTab>图层管理</PanelTab>
                <HeadClose><CloseX /></HeadClose>
              </MidHead>
              <AttrHead>
                <AttrCell>属性名称</AttrCell>
                <AttrCell>属性值</AttrCell>
                <AttrCell $end>附加</AttrCell>
              </AttrHead>
            </MidPanel>
          </MidCol>
        </Dock>

        <Canvas>
          <Arcs width="1362" height="10">
            {ARCS.map((x) => (
              <path key={x} d={`M${x - 8} 8q8-7 16 0`} fill="none" stroke="#0a7a0a" strokeWidth="1" />
            ))}
          </Arcs>
          <Handle>
            <I $s={10} $c="#ccc" $sw={2.5}><path d="M15 5l-7 7 7 7" /></I>
          </Handle>
          <Dialog>
            <DialogHead>
              非阴影区类型
              <DialogActions>
                <I $s={12} $c="#444" $sw={2}><rect x="3" y="3" width="18" height="18" /></I>
                <CloseX s={12} c="#555" />
              </DialogActions>
            </DialogHead>
            <DialogBody>
              <TypeList>
                {CARDS.map((c, i) => (
                  <TypeCell key={c.id} $on={i === 0} $pt={CELL_PAD[i].pt} $pl={CELL_PAD[i].pl}>
                    <CardDrawing card={c} />
                  </TypeCell>
                ))}
              </TypeList>
              <PreviewDrawing />
            </DialogBody>
            <DialogFoot>
              <FootBtn $primary>确定</FootBtn>
              <FootBtn>取消</FootBtn>
            </DialogFoot>
            <ResizeGrip />
          </Dialog>
          <Axes width="60" height="40" viewBox="0 0 60 40">
            <path d="M10 30V10" stroke="#00e000" strokeWidth="3" />
            <path d="M10 0l-5 12h10z" fill="#00e000" />
            <path d="M10 32h20" stroke="#ff0000" strokeWidth="4" />
            <path d="M38 32l-10-5v10z" fill="#ff0000" />
            <ellipse cx="10" cy="32" rx="4" ry="6" fill="#0000c0" />
            <text x="42" y="38" fontSize="14" fill="#e00000">X</text>
          </Axes>
          <Rail>
            <RailSlot><Orbit s={24} /></RailSlot>
            <RailSlot><Cube3D s={24} /></RailSlot>
            <RailSlot><CubeBase s={24} top /></RailSlot>
            <RailSlot $h={11}><Caret $c="#555" /></RailSlot>
            <RailSlot><CubeBase s={24} solid c={BLUE} /></RailSlot>
            <RailSlot $h={11}><Caret $c="#555" /></RailSlot>
            <RailSlot><FullFrame s={22} /></RailSlot>
            <RailSlot><LocalCube s={22} /></RailSlot>
            <RailRule />
            <RailSlot><DisplayDoc s={22} /></RailSlot>
          </Rail>
        </Canvas>
      </Main>

      <StatusBar>
        <StatusField $w={90}>层高： 1.8</StatusField>
        <StatusField $w={140}>标高： -1.8~0</StatusField>
        <StatusField $w={110}>选中图元：0</StatusField>
        <StatusField $w={110}>隐藏图元：0</StatusField>
        <SnapBtn $w={25}>
          <I $s={14} $c="#555" $sw={1.4}><path d="M5 3v17h16M5 13h5v7" /></I>
        </SnapBtn>
        <SnapBtn $w={36} $mr={6} $on>
          <I $s={15} $c="#444" $sw={1.4}><rect x="4" y="4" width="17" height="17" rx="3" /><circle cx="4" cy="4" r="2" stroke={BLUE} /></I>
          <Caret />
        </SnapBtn>
        <SnapBtn $w={25} $mr={6}>
          <I $s={15} $c="#888" $sw={1}><path d="M3 3l18 18M21 3L3 21" /></I>
        </SnapBtn>
        <SnapBtn $w={35} $on $mr={4}>
          <I $s={15} $c="#666" $sw={1.3}><path d="M4 18L18 4M4 21h16" /></I>
          <Caret />
        </SnapBtn>
        <SnapBtn $w={35} $mr={5}>
          <I $s={15} $c="#444" $sw={1.4}><path d="M5 3v8M1 7h8" /><rect x="8" y="14" width="12" height="5" fill="#444" /></I>
          <Caret />
        </SnapBtn>
        <SnapBtn $w={24}>
          <I $s={15} $c="#444" $sw={1.4}><rect x="5" y="3" width="13" height="14" fill="#666" /><path d="M4 21h14" /></I>
        </SnapBtn>
        <SnapBtn $w={24} $mr={0}>
          <I $s={15} $c="#777" $sw={1.2}><path d="M4 20V11l10-7" /><circle cx="4" cy="20" r="1.5" /><circle cx="15" cy="4" r="1.5" /><path d="M16 12l4 4h-4z" fill="#444" /></I>
        </SnapBtn>
        <HintIcon>
          <I $s={15} $c="#333" $sw={1.4}><path d="M4 20L20 4M14 3h7v7M3 14v7h7" /></I>
        </HintIcon>
        按鼠标左键指定第一个角点，或拾取构件图元
        <StatusDone>
          <I $s={14} $c="#fff" $sw={3}>
            <circle cx="12" cy="12" r="11" fill="#66b020" stroke="none" />
            <path d="M7 12l4 4 6-8" />
          </I>
          实时计算已完成
        </StatusDone>
      </StatusBar>

      <TaskBar>
        <StartArea>
          <StartOrb><WinFlag /></StartOrb>
          <TaskGrip />
        </StartArea>
        <TaskApps>
          <TaskApp $on><AppTile /></TaskApp>
          <TaskApp><CadTile /></TaskApp>
          <TaskApp><SwirlTile /></TaskApp>
          <TaskApp><EdgeTile /></TaskApp>
          <TaskApp><CloudTile /></TaskApp>
          <TaskApp><YuTile /></TaskApp>
        </TaskApps>
        <Tray>
          <TrayGrip />
          <TraySlot>
            <TileIcon $s={16}>
              <rect x="1" y="2" width="30" height="28" rx="6" fill="#e8501e" transform="rotate(-8 16 16)" />
              <text x="16" y="25" fontSize="24" fontWeight="700" fill="#fff" textAnchor="middle">S</text>
            </TileIcon>
          </TraySlot>
          <TraySlot>
            <TileIcon $s={16}>
              <circle cx="16" cy="16" r="14" fill="#14288c" stroke="#c9c9c9" strokeWidth="3" />
              <text x="16" y="24" fontSize="22" fontWeight="700" fill="#fff" textAnchor="middle">?</text>
            </TileIcon>
          </TraySlot>
          <TraySlot $w={18}>
            <I $s={9} $c="#fff" $sw={2.4}><rect x="8" y="3" width="13" height="11" /><rect x="3" y="9" width="13" height="11" /></I>
            <Caret $c="#fff" />
          </TraySlot>
          <TraySlot><SwirlTile s={16} /></TraySlot>
          <TraySlot><EdgeTile s={16} /></TraySlot>
          <TraySlot><CloudTile s={16} /></TraySlot>
          <TraySlot>
            <TileIcon $s={16}>
              <rect width="32" height="32" rx="3" fill="#fff" />
              <path d="M5 20h22v9H5z" fill="#e8741e" />
              <path d="M10 16a7 7 0 0 1 12-6" fill="none" stroke="#1e7be0" strokeWidth="4" />
            </TileIcon>
          </TraySlot>
          <TraySlot>
            <TileIcon $s={16}>
              <rect x="6" y="1" width="12" height="10" fill="#a9a9a9" />
              <rect x="4" y="10" width="16" height="20" rx="2" fill="#666" />
              <circle cx="23" cy="23" r="8" fill="#1c7a2c" />
              <path d="M19 23l3 3 5-6" stroke="#fff" strokeWidth="2" fill="none" />
            </TileIcon>
          </TraySlot>
          <TraySlot>
            <TileIcon $s={16}>
              <circle cx="16" cy="16" r="15" fill="#d8c810" stroke="#1f7a2c" strokeWidth="2" />
              <path d="M16 8v16M8 16h16" stroke="#126b22" strokeWidth="5" />
            </TileIcon>
          </TraySlot>
          <TraySlot>
            <TileIcon $s={16}>
              <path d="M3 11h7l9-8v26l-9-8H3z" fill="#e98a6a" stroke="#fff" />
              <path d="M24 9q5 7 0 14" stroke="#8b2d1c" strokeWidth="2" fill="none" />
            </TileIcon>
          </TraySlot>
          <TraySlot>
            <TileIcon $s={16}>
              <path d="M3 24h4v6H3zM10 19h4v11h-4zM17 13h4v17h-4zM24 6h4v24h-4z" fill="#fff" />
            </TileIcon>
          </TraySlot>
          <TraySlot>
            <TileIcon $s={16}>
              <path d="M3 11h6l8-8v26l-8-8H3z" fill="#d6e4ef" stroke="#fff" />
              <path d="M21 10q4 6 0 12M25 6q7 10 0 20" stroke="#fff" strokeWidth="2" fill="none" />
            </TileIcon>
          </TraySlot>
          <Clock>
            14:42 周日
            <ClockBadge>1</ClockBadge>
            <br />
            2024/6/16
          </Clock>
          <DesktopBox><DesktopPlay /></DesktopBox>
          <ShowDesktop />
        </Tray>
      </TaskBar>
    </Page>
  );
}
